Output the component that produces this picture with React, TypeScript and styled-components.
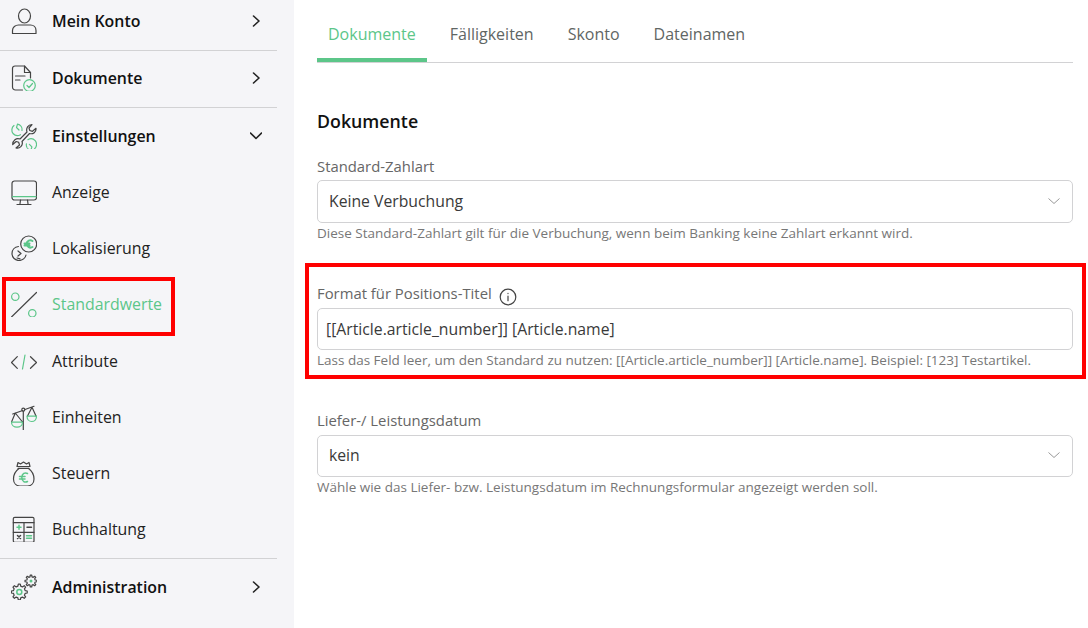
import React from "react";
import styled, { createGlobalStyle } from "styled-components";

const GlobalStyle = createGlobalStyle`
  html, body { margin: 0; padding: 0; height: 100%; background: #fff; }
  body { font-family: "Open Sans", "Liberation Sans", sans-serif; overflow: hidden; }
  #root { height: 100%; }
`;

const GREEN = "#5cc689";
const DARK = "#444";

const Page = styled.div`
  position: relative;
  display: flex;
  width: 1088px;
  height: 628px;
  overflow: hidden;
`;
const Sidebar = styled.nav`
  flex: 0 0 294px;
  height: 628px;
  box-sizing: border-box;
  padding-right: 17px;
  background: #f5f5f8;
  overflow: hidden;
`;
const MenuList = styled.div`
  margin-top: -7.4px;
  display: flex;
  flex-direction: column;
`;
const Divider = styled.div`
  height: 1px;
  margin: 1px 0 -0.6px;
  background: #d2d2d4;
`;
const MenuRow = styled.div<{ $top?: boolean }>`
  display: flex;
  align-items: center;
  height: 56.2px;
  padding-left: 11px;
  font-size: 15.9px;
  color: ${({ $top }) => ($top ? "#111" : "#222")};
  font-weight: ${({ $top }) => ($top ? 600 : 400)};
  &[data-active="true"] { color: ${GREEN}; }
`;
const MenuIcon = styled.svg`
  flex: 0 0 26px;
  width: 26px;
  height: 26px;
  margin-right: 15px;
  fill: none;
  stroke: ${DARK};
  stroke-width: 1.2;
  stroke-linecap: round;
  stroke-linejoin: round;
`;
const MenuLabel = styled.span`
  flex: 1;
`;
const Chevron = styled.svg`
  width: 12px;
  height: 12px;
  margin-right: 15px;
  fill: none;
  stroke: #222;
  stroke-width: 1.6;
  stroke-linecap: round;
  stroke-linejoin: round;
`;
const Content = styled.main`
  flex: 1;
  box-sizing: border-box;
  padding: 0 15px 0 23px;
`;
const Tabs = styled.div`
  display: flex;
  height: 63px;
  box-sizing: border-box;
  border-bottom: 1px solid #d2d2d4;
`;
const Tab = styled.div<{ $active?: boolean }>`
  height: 62px;
  box-sizing: border-box;
  padding: 23px 11px 0;
  margin-right: 12px;
  font-size: 16px;
  line-height: 22px;
  color: ${({ $active }) => ($active ? GREEN : "#5f6664")};
  border-bottom: 4px solid ${({ $active }) => ($active ? GREEN : "transparent")};
`;
const Heading = styled.h2`
  margin: 45px 0 0;
  font-size: 17.8px;
  line-height: 26px;
  font-weight: 600;
  color: #111;
`;
const Field = styled.div<{ $gap: number }>`
  margin-top: ${({ $gap }) => $gap}px;
`;
const Label = styled.label`
  display: flex;
  align-items: center;
  height: 20px;
  margin-bottom: 4.6px;
  font-size: 14.85px;
  color: #666;
`;
const InfoIcon = styled.svg`
  align-self: flex-start;
  width: 18px;
  height: 18px;
  margin: 4.500px 0 0 7px;
  fill: none;
  stroke: #444;
  stroke-width: 1.2;
  stroke-linecap: round;
`;
const Control = styled.div<{ $input?: boolean }>`
  display: flex;
  align-items: center;
  justify-content: space-between;
  height: 42.6px;
  box-sizing: border-box;
  padding: 0 12px ${({ $input }) => ($input ? 0 : 2)}px ${({ $input }) => ($input ? 8 : 11)}px;
  background: #fff;
  border: 1px solid #d2d2d4;
  border-radius: 5px;
  font-size: 15.75px;
  color: #3a3a3a;
`;
const CaretIcon = styled.svg`
  width: 12px;
  height: 12px;
  fill: none;
  stroke: #999;
  stroke-width: 1;
`;
const Hint = styled.div`
  margin-top: 0.8px;
  font-size: 13.5px;
  line-height: 18px;
  color: #777;
`;
const Highlight = styled.div`
  position: absolute;
  box-sizing: border-box;
  border: 4px solid #f00;
  pointer-events: none;
`;

// outline of a cog with square-ish teeth
const gearPath = (cx: number, cy: number, outer: number, inner: number, teeth: number) => {
  const step = (Math.PI * 2) / teeth;
  const pts: string[] = [];
  for (let i = 0; i < teeth; i++) {
    const a = i * step - Math.PI / 2;
    [
      [inner, a - step * 0.3],
      [outer, a - step * 0.16],
      [outer, a + step * 0.16],
      [inner, a + step * 0.3],
    ].forEach(([r, t]) => {
      pts.push(`${(cx + r * Math.cos(t)).toFixed(2)} ${(cy + r * Math.sin(t)).toFixed(2)}`);
    });
  }
  return `M${pts.join("L")}Z`;
};

const toolArc = "M6.500 1.200C9.500 1.800 11.500 4.500 11 7.500M3 2.500C.5 4.500.2 8 2 10.500c2 2.200 5 2.700 7.500 1.200M6.500 1.200L5.500 4.500 8 7";

const icons: Record<string, React.ReactNode> = {
  user: (
    <>
      <ellipse cx="13.500" cy="8" rx="6" ry="7" />
      <path d="M1.500 25.500v-3c0-3.500 3-5.500 6-5.500h12c3 0 5.500 2 5.500 5.500v3z" />
    </>
  ),
  doc: (
    <>
      <path d="M11.500 25H4.500c-1.800 0-3-1.200-3-3V3.500c0-1.400 1-2.500 2.500-2.500h9.500l6 6.500V13" />
      <path d="M13.500 1v6.500h6M4.500 11h9.500M4.500 15h4.500" />
      <circle cx="18.500" cy="20.500" r="5.800" stroke={GREEN} />
      <path d="M16 20.500l2 2 3.500-4" stroke={GREEN} />
    </>
  ),
  tools: (
    <>
      <path d="M16 9c-1.200-3.500 1-7.500 5-7.500l-3 3.500.8 2.500 2.700.8 3.500-3C25.500 9 22 11.500 18.500 10.500l-7.500 8c1.500 4-2.500 7.500-6 6.500l3.500-3-.8-2.700-2.500-.8-3.500 3c0-4 3.500-7 7.300-5.500z" />
      <path d={toolArc} stroke={GREEN} />
      <path d={toolArc} stroke={GREEN} transform="rotate(180 13.200 14.200)" />
    </>
  ),
  monitor: (
    <>
      <rect x="1" y="2" width="24.500" height="19" rx="2.500" />
      <path d="M1.500 17.700h23.500" stroke={GREEN} />
      <path d="M9.500 21l-.6 4.500M16.500 21l.6 4.500M6 25.500h14" />
    </>
  ),
  coins: (
    <>
      <path d="M7.500 11.500C3.500 12 1 15 1 18.500c0 4 3.200 7 7 7 3.500 0 6.500-2.500 7-5.500" />
      <path d="M7 16l3 2.500-3 2.500M6 23l3 .8" />
      <circle cx="17.700" cy="9" r="8" />
      <path d="M21.500 6c-2.500-1.500-5.500-.5-6 3 .2 3 3.500 4.500 6 3M13.500 8.500h5M13.500 10.500h5" stroke={GREEN} strokeWidth="2" />
    </>
  ),
  percent: (
    <>
      <path d="M25.500 1.500L.5 26" />
      <circle cx="4.300" cy="5.700" r="3.700" stroke={GREEN} />
      <circle cx="21.300" cy="22.300" r="3.700" stroke={GREEN} />
    </>
  ),
  code: (
    <>
      <path d="M6.300 8.700L.5 14.500l5.800 5.800M19.500 8.700l6 5.800-6 5.800" />
      <path d="M14 7l-2.500 14" stroke={GREEN} />
    </>
  ),
  scale: (
    <>
      <path d="M12.300 7v19.500M7.700 26.500h10M1.700 10l10-3.500M14 5.500l9-3.200M4.300 9L.5 18M4.300 9l7.200 9M21 3.300L16.500 12M21 3.300l4 8.700" />
      <circle cx="12.300" cy="5.700" r="1.500" />
      <path d="M.5 18.200h11c0 3-2.500 5-5.500 5s-5.500-2-5.500-5zM16 12.200h9.500c0 3-2 5.300-4.800 5.300s-4.700-2.300-4.700-5.300z" stroke={GREEN} />
    </>
  ),
  bag: (
    <>
      <path d="M7 8.300h11M7 2.500l2.500 1.500 3-2 3 2 2.500-1.500 1 4H6z" />
      <path d="M8 8.500C4.500 11 2.500 14.500 2.500 19c0 4.500 3 7 6.500 7h7.500c3.500 0 6.500-2.500 6.500-7 0-4.500-2-8-5.500-10.500" />
      <path d="M16.500 13.500c-2.500-1.500-5.500 0-5.700 4 .2 4 3.200 5.500 5.700 4M8.500 16.500h5.500M8.500 19h5.500" stroke={GREEN} strokeWidth="1.500" />
    </>
  ),
  calc: (
    <>
      <rect x="2.300" y="1.300" width="20.700" height="25" rx="1.500" />
      <path d="M2.300 6.700H23M2.300 16.300H23M13 6.700v19.600" />
      <path d="M16 11.300h4.500M6.500 19.500l3 3M9.500 19.500l-3 3" strokeWidth="1.500" />
      <path d="M8 9.300v4M6 11.300h4M15.500 19.700h5M15.500 22.300h5" stroke={GREEN} strokeWidth="1.500" />
    </>
  ),
  gears: (
    <>
      <path d={gearPath(8.300, 18, 8, 6, 8)} />
      <circle cx="8.300" cy="18" r="2.500" stroke={GREEN} strokeWidth="1.500" />
      <path d={gearPath(20, 7, 6, 4.300, 8)} />
      <circle cx="20" cy="7" r="0.800" stroke={GREEN} strokeWidth="1.400" />
    </>
  ),
};

type Item = { icon: string; label: string; top?: boolean; open?: boolean; active?: boolean; rule?: boolean };

const items: Item[] = [
  { icon: "user", label: "Mein Konto", top: true, rule: true },
  { icon: "doc", label: "Dokumente", top: true, rule: true },
  { icon: "tools", label: "Einstellungen", top: true, open: true },
  { icon: "monitor", label: "Anzeige" },
  { icon: "coins", label: "Lokalisierung" },
  { icon: "percent", label: "Standardwerte", active: true },
  { icon: "code", label: "Attribute" },
  { icon: "scale", label: "Einheiten" },
  { icon: "bag", label: "Steuern" },
  { icon: "calc", label: "Buchhaltung", rule: true },
  { icon: "gears", label: "Administration", top: true },
];

const Caret = () => (
  <CaretIcon viewBox="0 0 12 12">
    <path d="M.5 3.500L6 8.500l5.500-5" />
  </CaretIcon>
);

export default function App() {
  return (
    <Page>
      <GlobalStyle />
      <Sidebar>
        <MenuList>
          {items.map((item) => (
            <React.Fragment key={item.label}>
              <MenuRow $top={item.top} data-active={!!item.active}>
                <MenuIcon viewBox="0 0 26 26">{icons[item.icon]}</MenuIcon>
                <MenuLabel>{item.label}</MenuLabel>
                {item.top && (
                  <Chevron viewBox="0 0 12 12">
                    {item.open ? <path d="M.5 3l5.500 5.500L11.500 3" /> : <path d="M3.500 1l5.500 5-5.500 5" />}
                  </Chevron>
                )}
              </MenuRow>
              {item.rule && <Divider />}
            </React.Fragment>
          ))}
        </MenuList>
      </Sidebar>
      <Content>
        <Tabs>
          <Tab $active>Dokumente</Tab>
          <Tab>Fälligkeiten</Tab>
          <Tab>Skonto</Tab>
          <Tab>Dateinamen</Tab>
        </Tabs>
        <Heading>Dokumente</Heading>
        <Field $gap={21.7}>
          <Label>Standard-Zahlart</Label>
          <Control>
            Keine Verbuchung
            <Caret />
          </Control>
          <Hint>Diese Standard-Zahlart gilt für die Verbuchung, wenn beim Banking keine Zahlart erkannt wird.</Hint>
        </Field>
        <Field $gap={41.6}>
          <Label>
            Format für Positions-Titel
            <InfoIcon viewBox="0 0 18 18">
              <circle cx="9" cy="9" r="7.800" />
              <path d="M9 8.200v4.500M9 5.400v.2" />
            </InfoIcon>
          </Label>
          <Control $input>[[Article.article_number]] [Article.name]</Control>
          <Hint>
            Lass das Feld leer, um den Standard zu nutzen: [[Article.article_number]] [Article.name]. Beispiel: [123]
            Testartikel.
          </Hint>
        </Field>
        <Field $gap={40.8}>
          <Label>Liefer-/ Leistungsdatum</Label>
          <Control>
            kein
            <Caret />
          </Control>
          <Hint>Wähle wie das Liefer- bzw. Leistungsdatum im Rechnungsformular angezeigt werden soll.</Hint>
        </Field>
      </Content>
      <Highlight style={{ left: 2, top: 277, width: 173, height: 59 }} />
      <Highlight style={{ left: 305, top: 263, width: 781, height: 116 }} />
    </Page>
  );
}
